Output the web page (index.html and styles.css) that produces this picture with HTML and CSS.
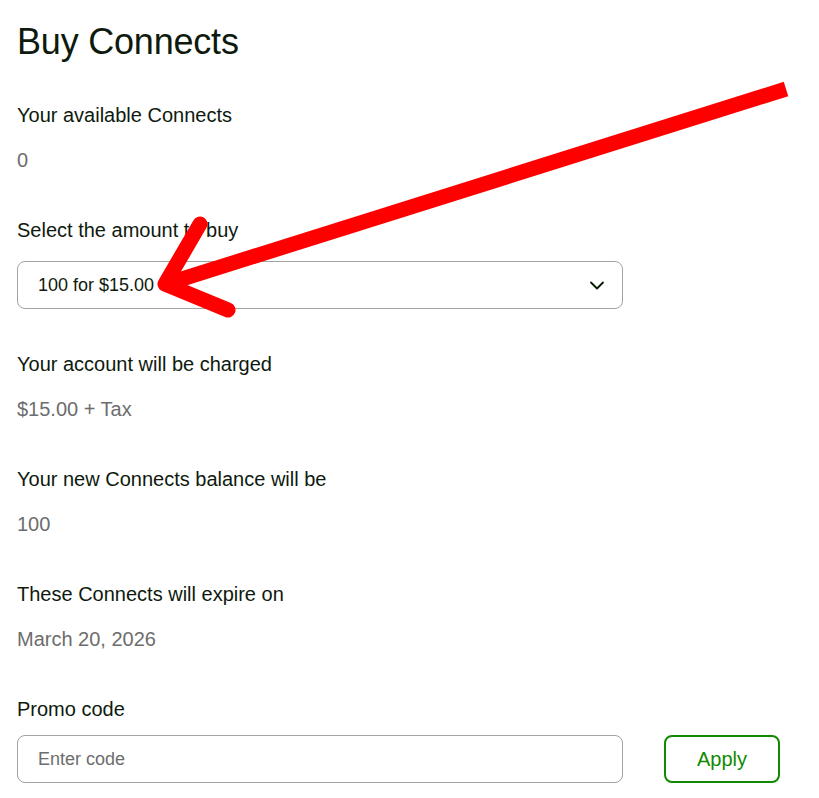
FILE: index.html
```html
<!DOCTYPE html>
<html lang="en">

<head>
    <meta charset="UTF-8">
    <meta name="viewport" content="width=device-width, initial-scale=1.0">
    <title>Buy Connects</title>
    <link rel="stylesheet" href="styles.css">
</head>

<body>
    <div class="page">
        <h1 class="title">Buy Connects</h1>

        <div class="field">
            <div class="label">Your available Connects</div>
            <div class="value">0</div>
        </div>

        <div class="field field-select">
            <div class="label">Select the amount to buy</div>
            <div class="select">
                <span>100 for $15.00</span>
                <svg class="chevron" width="18" height="18" viewBox="0 0 18 18">
                    <path d="M3 6.5 L9 12.5 L15 6.5" fill="none" stroke="#001e00" stroke-width="1.8" stroke-linecap="round" stroke-linejoin="round" />
                </svg>
            </div>
        </div>

        <div class="field">
            <div class="label">Your account will be charged</div>
            <div class="value">$15.00 + Tax</div>
        </div>

        <div class="field">
            <div class="label">Your new Connects balance will be</div>
            <div class="value">100</div>
        </div>

        <div class="field">
            <div class="label">These Connects will expire on</div>
            <div class="value">March 20, 2026</div>
        </div>

        <div class="field field-promo">
            <div class="label">Promo code</div>
            <div class="promo-row">
                <div class="input">Enter code</div>
                <button class="apply">Apply</button>
            </div>
        </div>

        <!-- annotation arrow -->
        <svg class="arrow" width="819" height="798" viewBox="0 0 819 798">
            <line x1="786" y1="89" x2="166" y2="284" stroke="#ff0000" stroke-width="15" />
            <polyline points="200,224 165,284 228,310" fill="none" stroke="#ff0000" stroke-width="15" stroke-linecap="round" stroke-linejoin="round" />
        </svg>
    </div>
</body>

</html>
```

FILE: styles.css
```css
* {
    padding: 0;
    margin: 0;
    box-sizing: border-box;
}

html,
body {
    width: 100%;
    height: 100%;
    background: #fff;
}

body {
    font-family: "Liberation Sans", Arial, sans-serif;
    color: #0e1a0e;
}

.page {
    position: relative;
    width: 819px;
    height: 798px;
    overflow: hidden;
    padding: 22px 0 0 17px;
}

.title {
    font-size: 36px;
    font-weight: 400;
    line-height: 40px;
    letter-spacing: -0.2px;
    margin-bottom: 41px;
}

.field {
    margin-bottom: 46px;
}

.label {
    font-size: 20px;
    line-height: 24px;
}

.value {
    font-size: 20px;
    line-height: 24px;
    color: #6d6d6d;
    margin-top: 21px;
}

.field-select {
    margin-bottom: 43px;
}

.select {
    margin-top: 19px;
    width: 606px;
    height: 48px;
    border: 1px solid #a3a3a3;
    border-radius: 8px;
    display: flex;
    align-items: center;
    justify-content: space-between;
    padding: 0 16px 0 20px;
    font-size: 18px;
}

.promo-row {
    margin-top: 14px;
    display: flex;
    align-items: center;
    gap: 41px;
}

.input {
    width: 606px;
    height: 48px;
    border: 1px solid #a3a3a3;
    border-radius: 8px;
    display: flex;
    align-items: center;
    padding: 0 20px;
    font-size: 18px;
    color: #6d6d6d;
}

.apply {
    width: 116px;
    height: 48px;
    border: 2px solid #108a00;
    border-radius: 8px;
    background: #fff;
    color: #108a00;
    font-family: "Liberation Sans", Arial, sans-serif;
    font-size: 20px;
}

.arrow {
    position: absolute;
    left: 0;
    top: 0;
    pointer-events: none;
}
```
